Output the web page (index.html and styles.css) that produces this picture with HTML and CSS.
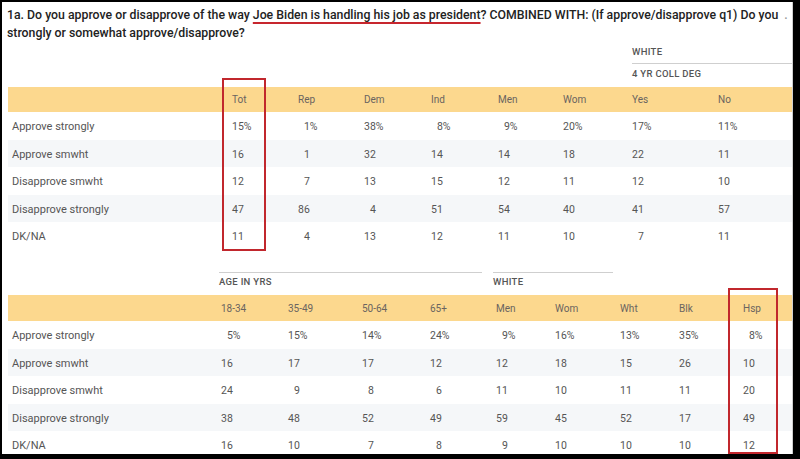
FILE: index.html
```html
<!DOCTYPE html>
<html>
<head>
<meta charset="utf-8">
<link rel="stylesheet" href="styles.css">
</head>
<body>
<div class="frame">
  <h1 class="q">1a. Do you approve or disapprove of the way <span class="hl">Joe Biden is handling his job as president</span>? COMBINED WITH: (If approve/disapprove q1) Do you <span class="cut">.</span><br>strongly or somewhat approve/disapprove?</h1>

  <section class="tbl t1">
    <div class="groups g1">
      <div class="grp white1"><div class="gl top">WHITE</div><div class="gl">4 YR COLL DEG</div></div>
    </div>
    <div class="row band">
      <div></div><div>Tot</div><div>Rep</div><div>Dem</div><div>Ind</div><div>Men</div><div>Wom</div><div>Yes</div><div>No</div>
    </div>
    <div class="row">
      <div class="lab">Approve strongly</div>
      <div><span class="n">15</span>%</div><div><span class="n">1</span>%</div><div><span class="n">38</span>%</div><div><span class="n">8</span>%</div><div><span class="n">9</span>%</div><div><span class="n">20</span>%</div><div><span class="n">17</span>%</div><div><span class="n">11</span>%</div>
    </div>
    <div class="row alt">
      <div class="lab">Approve smwht</div>
      <div><span class="n">16</span></div><div><span class="n">1</span></div><div><span class="n">32</span></div><div><span class="n">14</span></div><div><span class="n">14</span></div><div><span class="n">18</span></div><div><span class="n">22</span></div><div><span class="n">11</span></div>
    </div>
    <div class="row">
      <div class="lab">Disapprove smwht</div>
      <div><span class="n">12</span></div><div><span class="n">7</span></div><div><span class="n">13</span></div><div><span class="n">15</span></div><div><span class="n">12</span></div><div><span class="n">11</span></div><div><span class="n">12</span></div><div><span class="n">10</span></div>
    </div>
    <div class="row alt">
      <div class="lab">Disapprove strongly</div>
      <div><span class="n">47</span></div><div><span class="n">86</span></div><div><span class="n">4</span></div><div><span class="n">51</span></div><div><span class="n">54</span></div><div><span class="n">40</span></div><div><span class="n">41</span></div><div><span class="n">57</span></div>
    </div>
    <div class="row">
      <div class="lab">DK/NA</div>
      <div><span class="n">11</span></div><div><span class="n">4</span></div><div><span class="n">13</span></div><div><span class="n">12</span></div><div><span class="n">11</span></div><div><span class="n">10</span></div><div><span class="n">7</span></div><div><span class="n">11</span></div>
    </div>
  </section>

  <section class="tbl t2">
    <div class="groups g2">
      <div class="grp age"><div class="gl">AGE IN YRS</div></div>
      <div class="grp white2"><div class="gl">WHITE</div></div>
    </div>
    <div class="row band">
      <div></div><div>18-34</div><div>35-49</div><div>50-64</div><div>65+</div><div>Men</div><div>Wom</div><div>Wht</div><div>Blk</div><div>Hsp</div>
    </div>
    <div class="row">
      <div class="lab">Approve strongly</div>
      <div><span class="n">5</span>%</div><div><span class="n">15</span>%</div><div><span class="n">14</span>%</div><div><span class="n">24</span>%</div><div><span class="n">9</span>%</div><div><span class="n">16</span>%</div><div><span class="n">13</span>%</div><div><span class="n">35</span>%</div><div><span class="n">8</span>%</div>
    </div>
    <div class="row alt">
      <div class="lab">Approve smwht</div>
      <div><span class="n">16</span></div><div><span class="n">17</span></div><div><span class="n">17</span></div><div><span class="n">12</span></div><div><span class="n">12</span></div><div><span class="n">18</span></div><div><span class="n">15</span></div><div><span class="n">26</span></div><div><span class="n">10</span></div>
    </div>
    <div class="row">
      <div class="lab">Disapprove smwht</div>
      <div><span class="n">24</span></div><div><span class="n">9</span></div><div><span class="n">8</span></div><div><span class="n">6</span></div><div><span class="n">11</span></div><div><span class="n">10</span></div><div><span class="n">11</span></div><div><span class="n">11</span></div><div><span class="n">20</span></div>
    </div>
    <div class="row alt">
      <div class="lab">Disapprove strongly</div>
      <div><span class="n">38</span></div><div><span class="n">48</span></div><div><span class="n">52</span></div><div><span class="n">49</span></div><div><span class="n">59</span></div><div><span class="n">45</span></div><div><span class="n">52</span></div><div><span class="n">17</span></div><div><span class="n">49</span></div>
    </div>
    <div class="row">
      <div class="lab">DK/NA</div>
      <div><span class="n">16</span></div><div><span class="n">10</span></div><div><span class="n">7</span></div><div><span class="n">8</span></div><div><span class="n">9</span></div><div><span class="n">10</span></div><div><span class="n">10</span></div><div><span class="n">10</span></div><div><span class="n">12</span></div>
    </div>
  </section>

  <div class="mark mark-tot"></div>
  <div class="mark mark-hsp"></div>
</div>
</body>
</html>
```

FILE: styles.css
```css
html, body {
  margin: 0;
  padding: 0;
  background: #000;
}
body {
  width: 800px;
  height: 459px;
  overflow: hidden;
}
.frame {
  position: relative;
  margin: 2px 0 0 2px;
  width: 791px;
  height: 452px;
  border-right: 1px solid #cfcfcf;
  background: #fff;
  overflow: hidden;
  padding: 0 1px 0 6px;
  box-sizing: border-box;
  font-family: Roboto, "Liberation Sans", sans-serif;
  color: #555;
}
.q {
  margin: 0 0 0 -1px;
  padding-top: 4px;
  font-size: 12.3px;
  line-height: 18px;
  font-weight: 500;
  color: #222;
  white-space: nowrap;
}
.hl {
  text-decoration: underline;
  text-decoration-color: #c7262e;
  text-decoration-thickness: 2px;
  text-underline-offset: 3px;
}
.cut {
  color: #999;
  margin-left: 3px;
}
.tbl {
  width: 784px;
}
.t1 .row, .g1 {
  display: grid;
  grid-template-columns: 224px 66px 66px 67px 67px 65px 69px 86px 74px;
}
.t2 .row, .g2 {
  display: grid;
  grid-template-columns: 213px 67px 74px 68px 66px 59px 65px 59px 64px 49px;
}
.grp {
  font-size: 9.5px;
  font-weight: 500;
  letter-spacing: 0.3px;
  color: #555;
}
.white1 {
  grid-column: 8 / 10;
}
.white1 .gl {
  padding: 3px 0 6px;
  line-height: 14px;
}
.white1 .gl.top {
  padding-bottom: 4px;
  border-bottom: 1px solid #cfcfcf;
}
.t2 {
  margin-top: 22.5px;
}
.age {
  grid-column: 2 / 6;
  margin: 0 14px 0 -2px;
}
.white2 {
  grid-column: 6 / 8;
  margin: 0 7px 0 -3px;
}
.g2 .grp {
  border-top: 1px solid #cfcfcf;
}
.g2 .gl {
  padding: 2px 0 6px;
  line-height: 14px;
}
.row {
  height: 27.5px;
  align-items: center;
  font-size: 10.5px;
  color: #555;
}
.row > div {
  padding-top: 2px;
}
.row.band {
  height: 25px;
  background: #fcd88e;
  font-size: 10px;
  color: #6a6460;
}
.row.band > div {
  padding-top: 0;
}
.t2 .row.band {
  height: 26px;
}
.row.alt {
  background: #f5f7f9;
}
.lab {
  padding-left: 4px;
  font-size: 11px;
  color: #555;
}
.n {
  display: inline-block;
  width: 2ch;
  text-align: right;
  font-variant-numeric: tabular-nums;
}
.mark {
  position: absolute;
  border: 2px solid #c1272d;
  box-sizing: border-box;
}
.mark-tot {
  left: 220px;
  top: 76px;
  width: 44px;
  height: 173px;
}
.mark-hsp {
  left: 726px;
  top: 286px;
  width: 50px;
  height: 166px;
}
```
